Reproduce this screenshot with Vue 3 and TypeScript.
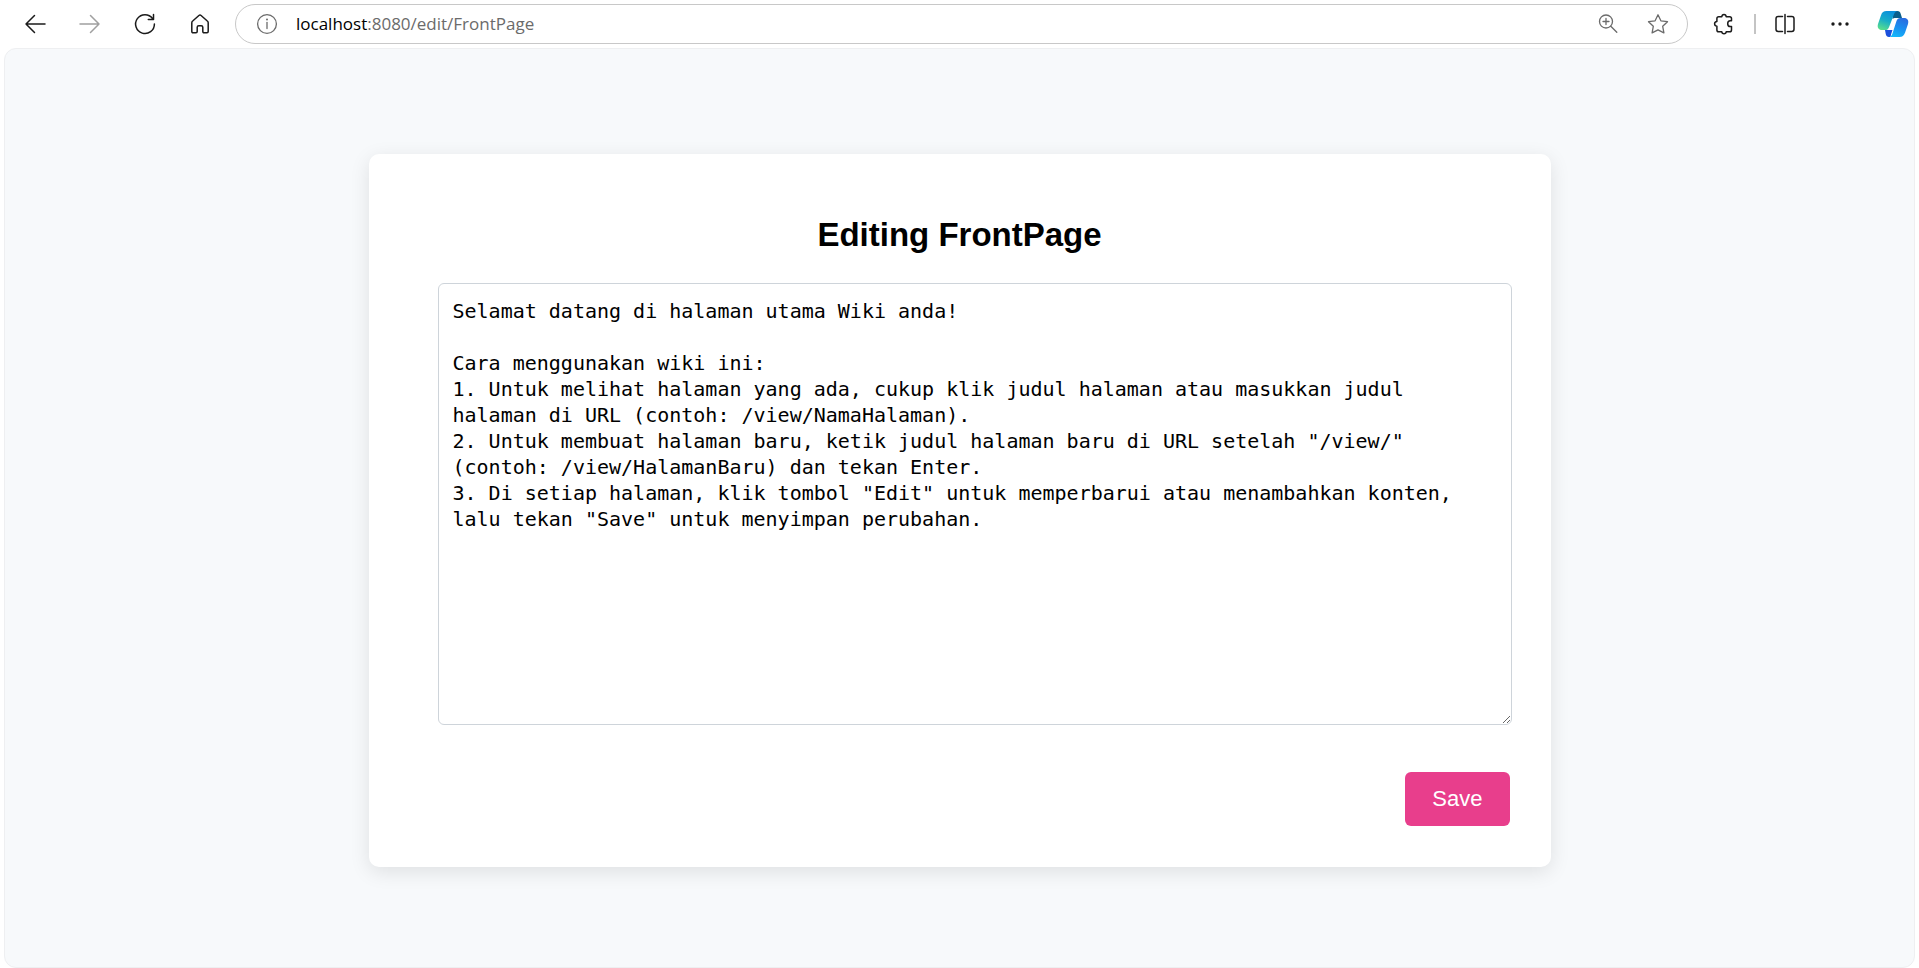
<script setup lang="ts">
import { ref } from 'vue'

const host = 'localhost'
const path = ':8080/edit/FrontPage'
const title = 'FrontPage'

const body = ref<string>(
  [
    'Selamat datang di halaman utama Wiki anda!',
    '',
    'Cara menggunakan wiki ini:',
    '1. Untuk melihat halaman yang ada, cukup klik judul halaman atau masukkan judul halaman di URL (contoh: /view/NamaHalaman).',
    '2. Untuk membuat halaman baru, ketik judul halaman baru di URL setelah "/view/" (contoh: /view/HalamanBaru) dan tekan Enter.',
    '3. Di setiap halaman, klik tombol "Edit" untuk memperbarui atau menambahkan konten, lalu tekan "Save" untuk menyimpan perubahan.',
  ].join('\n'),
)
</script>

<template>
  <div class="window">
    <header class="toolbar">
      <nav class="nav" aria-label="Browser">
        <button class="tool" type="button" aria-label="Back">
          <svg viewBox="0 0 24 24"><path d="M22 12H3M11.5 3.5L3 12l8.5 8.5" /></svg>
        </button>
        <button class="tool muted" type="button" aria-label="Forward" disabled>
          <svg viewBox="0 0 24 24"><path d="M2 12h19M12.5 3.5L21 12l-8.5 8.5" /></svg>
        </button>
        <button class="tool" type="button" aria-label="Refresh">
          <svg viewBox="0 0 24 24"><path d="M19.6 6.6A9.4 9.4 0 1 0 21.400 12M20.500 2.500v5h-5.200" /></svg>
        </button>
        <button class="tool" type="button" aria-label="Home">
          <svg viewBox="0 0 24 24"><path d="M3.800 10.800c0-.8.3-1.300.9-1.800l6.200-5.500c.7-.6 1.500-.6 2.200 0L19.300 9c.6.5.9 1 .9 1.800v8.700c0 .7-.5 1.200-1.200 1.200h-3c-.7 0-1.200-.5-1.200-1.200v-4.200c0-1-.6-1.600-1.600-1.600h-2.400c-1 0-1.600.6-1.600 1.600v4.200c0 .7-.5 1.200-1.200 1.200H5c-.7 0-1.200-.5-1.200-1.200z" /></svg>
        </button>
      </nav>

      <div class="address">
        <button class="tool gray" type="button" aria-label="Site information">
          <svg viewBox="0 0 24 24"><circle cx="12" cy="12" r="9.4" /><path d="M12 10.500v6" /><circle class="dot" cx="12" cy="7.500" r="1" /></svg>
        </button>
        <div class="url" role="textbox" aria-label="Address" contenteditable="true" spellcheck="false"><span class="host">{{ host }}</span>{{ path }}</div>
        <div class="address-actions">
          <button class="tool gray" type="button" aria-label="Zoom">
            <svg viewBox="0 0 24 24"><circle cx="10" cy="9.500" r="6.500" /><path d="M14.800 14.300l6 6M10 6.500v6M7 9.500h6" /></svg>
          </button>
          <button class="tool gray" type="button" aria-label="Add to favorites">
            <svg viewBox="0 0 24 24"><path d="M12 2.800l2.900 6 6.600.9-4.800 4.600 1.200 6.600L12 17.800l-5.900 3.100 1.200-6.600-4.800-4.600 6.600-.9z" /></svg>
          </button>
        </div>
      </div>

      <div class="extras">
        <button class="tool" type="button" aria-label="Extensions">
          <svg viewBox="0 0 24 24"><path d="M6.700 4.700h3.100c.1-1.400 1-2.200 2.200-2.200s2.100.8 2.200 2.200h3.500c1.100 0 1.800.7 1.800 1.800v2.300h-1.300c-1.500 0-2.500 1.300-2.500 2.900s1 2.900 2.500 2.900h1.300v3.300c0 1.100-.7 1.800-1.800 1.800h-3.500c-.1 1.300-1 2-2.200 2s-2.100-.7-2.200-2H6.700c-1.100 0-1.800-.7-1.800-1.800v-3.700c-1.400-.1-2.300-1.100-2.300-2.400s.9-2.300 2.300-2.400V6.500c0-1.100.7-1.800 1.800-1.800z" /></svg>
        </button>
        <span class="divider"></span>
        <button class="tool" type="button" aria-label="Split screen">
          <svg viewBox="0 0 24 24"><path d="M12 2.500v19M9.500 4.500H5.200C3.800 4.500 3 5.300 3 6.700v10.600c0 1.400.8 2.200 2.200 2.200h4.300M14.500 4.500h4.300c1.400 0 2.200.8 2.200 2.200v10.600c0 1.400-.8 2.200-2.200 2.200h-4.300" /></svg>
        </button>
        <button class="tool more" type="button" aria-label="Settings and more">
          <svg viewBox="0 0 24 24"><circle class="dot" cx="5" cy="12" r="1.700" /><circle class="dot" cx="12" cy="12" r="1.700" /><circle class="dot" cx="19" cy="12" r="1.700" /></svg>
        </button>
        <button class="tool copilot" type="button" aria-label="Copilot">
          <svg viewBox="0 0 32 28">
            <defs>
              <linearGradient id="cp-left" x1="0.6" y1="0" x2="0.2" y2="1">
                <stop offset="0" stop-color="#0a8fdc" />
                <stop offset="0.5" stop-color="#18aec8" />
                <stop offset="1" stop-color="#5be08a" />
              </linearGradient>
              <linearGradient id="cp-right" x1="0.7" y1="0" x2="0.3" y2="1">
                <stop offset="0" stop-color="#2a6cdf" />
                <stop offset="0.5" stop-color="#1a8ff0" />
                <stop offset="1" stop-color="#14b8fa" />
              </linearGradient>
            </defs>
            <path fill="#0b5f8c" d="M16 1h4.500c1.800 0 2.700 1 3.200 2.700L25 8h-4.500c-2 0-3.400-.6-5 1z" />
            <path fill="#1b4fdc" d="M8 20h7.500l-1.500 4.500c-.3 1.200-.2 2.500-1 2.500h-1c-1.800 0-2.700-1-3.200-2.700z" />
            <path fill="url(#cp-left)" d="M9.500 1H21c-2.200.2-3.300 1.400-4 3.200l-5 13c-.8 2-2 2.800-4 2.800H5c-3.500 0-5-2.500-4-6L4 5.200C5 2.400 6.600 1 9.500 1z" />
            <path fill="url(#cp-right)" d="M23.500 8H27c3.500 0 5 2.500 4 6l-3 8.800c-1 2.800-2.600 4.200-5.500 4.200H12c1.800-.2 2.700-1.400 3.300-3l4.200-13c.7-2 1.900-3 4-3z" />
          </svg>
        </button>
      </div>
    </header>

    <main class="page">
      <section class="card">
        <h1>Editing {{ title }}</h1>
        <form @submit.prevent>
          <textarea v-model="body" name="body" aria-label="Page content" spellcheck="false"></textarea>
          <button class="save" type="submit">Save</button>
        </form>
      </section>
    </main>
  </div>
</template>

<style>
body {
  margin: 0;
  background: #ffffff;
}
</style>

<style scoped>
.window {
  display: flex;
  flex-direction: column;
  min-height: 100vh;
  box-sizing: border-box;
  padding: 0 4px;
  font-family: "Liberation Sans", Arial, sans-serif;
}

.toolbar {
  display: flex;
  align-items: center;
  height: 48px;
  padding: 0 6px 0 19px;
}

.nav {
  display: flex;
  gap: 31px;
}

.tool {
  display: flex;
  flex: none;
  width: 24px;
  height: 24px;
  padding: 0;
  border: 0;
  background: none;
  color: #1b1b1b;
}

.tool svg {
  width: 100%;
  height: 100%;
  fill: none;
  stroke: currentColor;
  stroke-width: 1.5;
  stroke-linecap: round;
  stroke-linejoin: round;
}

.tool .dot {
  fill: currentColor;
  stroke: none;
}

.tool.muted {
  color: #a0a0a0;
}

.tool.gray {
  color: #6b6b6b;
}

.tool.gray svg {
  stroke-width: 1.3;
}

.address {
  display: flex;
  flex: 1;
  align-items: center;
  height: 40px;
  box-sizing: border-box;
  margin-left: 23px;
  padding: 0 17px 0 19px;
  border: 1px solid #c8c8c8;
  border-radius: 20px;
}

.url {
  flex: 1;
  margin-left: 17px;
  font: 17px/24px "Open Sans", "Noto Sans", sans-serif;
  color: #6b6b6b;
  outline: none;
}

.host {
  color: #000000;
}

.address-actions {
  display: flex;
  gap: 26px;
}

.extras {
  display: flex;
  align-items: center;
  margin-left: 24px;
}

.divider {
  width: 2px;
  height: 20px;
  margin: 0 17px 0 18px;
  background: #c4c4c4;
}

.more {
  margin-left: 31px;
}

.copilot {
  width: 32px;
  height: 28px;
  margin-left: 25px;
}

.copilot svg {
  stroke: none;
}

.page {
  display: flex;
  flex: 1;
  align-items: center;
  justify-content: center;
  box-sizing: border-box;
  padding: 24px 24px 20px;
  border: 1px solid #eeeff1;
  border-radius: 12px;
  background: #f7f9fb;
}

.card {
  width: 100%;
  max-width: 1182px;
  box-sizing: border-box;
  padding: 61px 41px 41px;
  border-radius: 10px;
  background: #ffffff;
  box-shadow: 0 5px 20px rgba(0, 0, 0, 0.1);
}

h1 {
  margin: 0 0 28px;
  font-size: 33px;
  line-height: 40px;
  text-align: center;
  color: #000000;
}

form {
  display: flex;
  flex-direction: column;
  gap: 47px;
  margin-right: -2px;
  padding-left: 28px;
}

textarea {
  width: 100%;
  height: 442px;
  box-sizing: border-box;
  padding: 14px;
  border: 1px solid #ced4da;
  border-radius: 6px;
  background: #ffffff;
  color: #000000;
  font: 20px/26px "DejaVu Sans Mono", "Liberation Mono", monospace;
  resize: vertical;
  outline: none;
}

.save {
  align-self: flex-end;
  margin-right: 2px;
  padding: 14px 27px;
  border: 0;
  border-radius: 6px;
  background: #e83e8c;
  color: #ffffff;
  font: 22px/26px "Liberation Sans", Arial, sans-serif;
}
</style>
